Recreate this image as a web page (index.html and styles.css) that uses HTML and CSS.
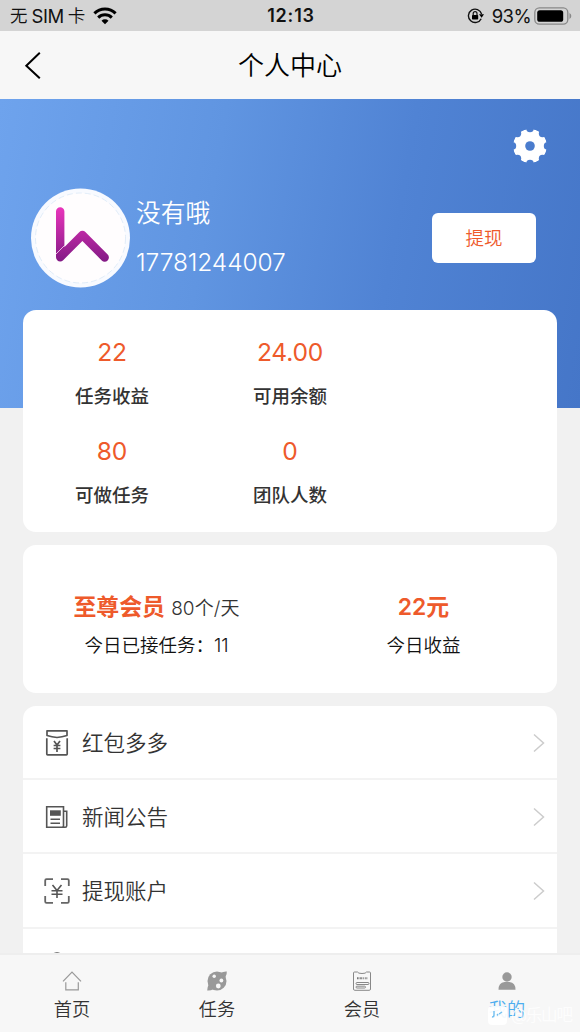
FILE: index.html
```html
<!DOCTYPE html>
<html lang="zh-CN">
<head>
<meta charset="utf-8">
<title>个人中心</title>
<link rel="stylesheet" href="styles.css">
</head>
<body>
<div class="app">
  <div class="status">
    <div class="status-side"><span class="carrier"><span>无</span><span class="sim">SIM</span><span>卡</span></span>
      <svg class="wifi" width="24" height="18" viewBox="0 0 24 18"><g fill="none" stroke="#000" stroke-width="3"><path d="M1.400 6.400a15 15 0 0 1 21.200 0"/><path d="M5.200 10.600a9.600 9.600 0 0 1 13.600 0"/></g><path d="M12 17.200l-3.500-3.500a5 5 0 0 1 7 0z"/></svg>
    </div>
    <b class="time">12:13</b>
    <div class="status-side status-right">
      <svg width="18" height="16" viewBox="0 0 18 16"><path d="M14.200 10.700A6.700 6.700 0 1 1 14.600 6" fill="none" stroke="#111" stroke-width="1.400"/><path d="M12 6.300h5l-2.400 3.400z"/><rect x="5" y="7" width="6.200" height="4.500" rx=".7"/><path d="M6.200 7.400V5.600a1.900 1.900 0 0 1 3.800 0v1.800" fill="none" stroke="#111" stroke-width="1.200"/></svg>
      <span class="percent">93%</span>
      <svg width="38" height="18" viewBox="0 0 38 18"><rect x=".8" y=".8" width="33" height="16.400" rx="4.600" fill="none" stroke="#888" stroke-width="1.300"/><rect x="3.200" y="3.200" width="26" height="11.600" rx="2.600"/><path d="M35.500 6v6q1.800-.8 1.800-3t-1.800-3z" fill="#888"/></svg>
    </div>
  </div>
  <header class="nav">
    <svg width="18" height="28" viewBox="0 0 18 28"><path d="M15.800 1.800L2.300 14.800l13.500 12.500" fill="none" stroke="#000" stroke-width="2"/></svg>
    <h1>个人中心</h1>
  </header>
  <main class="content">
    <section class="hero">
      <div class="settings">
        <svg width="34" height="34" viewBox="-17 -17 34 34"><defs><mask id="notches"><circle r="17" fill="#fff"/><g fill="#000"><circle r="4.800"/><circle cy="-17.500" r="3.700"/><circle cy="17.500" r="3.700"/><circle cx="-17.500" r="3.700"/><circle cx="17.500" r="3.700"/><circle cx="12.500" cy="12.500" r="3.700"/><circle cx="-12.500" cy="12.500" r="3.700"/><circle cx="12.500" cy="-12.500" r="3.700"/><circle cx="-12.500" cy="-12.500" r="3.700"/></g></mask></defs><circle r="17" fill="#fff" mask="url(#notches)"/></svg>
      </div>
      <div class="profile">
        <svg class="avatar" width="100" height="100" viewBox="0 0 100 100"><defs><linearGradient id="pink" gradientUnits="userSpaceOnUse" x1="0" y1="18" x2="0" y2="74"><stop stop-color="#ec36bd"/><stop offset="1" stop-color="#821a85"/></linearGradient></defs><circle cx="50.500" cy="50" r="49.500" fill="#f8faff"/><circle cx="50.500" cy="50" r="45" fill="#fffdfe" stroke="#dbe8f6" stroke-width=".8" stroke-dasharray="6 3"/><g fill="none" stroke="url(#pink)" stroke-width="8.400" stroke-linecap="round" stroke-linejoin="round"><path d="M30.200 23.500V69.200L52.400 47 74.700 69.500"/></g><path d="M26 66l9-9" stroke="#efcbe9" stroke-width=".9"/></svg>
        <div class="who"><div class="name">没有哦</div><div class="phone">17781244007</div></div>
        <button class="withdraw">提现</button>
      </div>
    </section>
    <section class="card stats">
      <div class="stat"><div class="num">22</div><div class="label">任务收益</div></div>
      <div class="stat"><div class="num">24.00</div><div class="label">可用余额</div></div>
      <div class="stat next"><div class="num">80</div><div class="label">可做任务</div></div>
      <div class="stat next"><div class="num">0</div><div class="label">团队人数</div></div>
    </section>
    <section class="card member">
      <div class="half"><div class="top"><b>至尊会员</b> <span class="quota">80个/天</span></div><div class="sub">今日已接任务：11</div></div>
      <div class="half"><div class="top"><b>22元</b></div><div class="sub">今日收益</div></div>
    </section>
    <section class="card list">
      <div class="row">
        <svg class="ico" width="28" height="28" viewBox="0 0 28 28"><g fill="none" stroke="#555" stroke-width="1.700" stroke-linejoin="round"><path d="M4 1.800h20V6.500q-5 1.400-10 2Q9 7.900 4 6.500z"/><path d="M3.800 9.200V25q0 .8.8.8h18.800q.8 0 .8-.8V9.200"/><path d="M11 12l3 4 3-4M14 16v7M10.600 16.500h6.800M10.600 19.500h6.800"/></g></svg>
        <span>红包多多</span><svg class="arrow" width="12" height="20" viewBox="0 0 12 20"><path d="M1 1.500L10.500 10 1 18.500"/></svg></div>
      <div class="row">
        <svg class="ico" width="28" height="28" viewBox="0 0 28 28"><g fill="none" stroke="#555" stroke-width="1.600"><path d="M3.700 3.800H20.500V24.200H3.700z"/><path d="M20.500 8.200h3.200v14.500q0 1.500-1.500 1.500h-3"/><path d="M7.500 16.300h9.500M7.500 20.300h9.500"/></g><path d="M7 7.300h10.800v5.500H7z" fill="#555"/></svg>
        <span>新闻公告</span><svg class="arrow" width="12" height="20" viewBox="0 0 12 20"><path d="M1 1.500L10.500 10 1 18.500"/></svg></div>
      <div class="row">
        <svg class="ico" width="28" height="28" viewBox="0 0 28 28"><g fill="none" stroke="#666" stroke-width="1.800"><path d="M2.200 9V3.500q0-1.300 1.300-1.300H10M18 2.200h6.500q1.300 0 1.300 1.300V9M25.800 19v5.500q0 1.300-1.300 1.300H18M10 25.800H3.500q-1.300 0-1.300-1.300V19"/></g><path d="M9.500 8l4.500 5.500L18.500 8M14 13.500V21M8.500 13.700h11M8.500 17.300h11" fill="none" stroke="#555" stroke-width="1.600"/></svg>
        <span>提现账户</span><svg class="arrow" width="12" height="20" viewBox="0 0 12 20"><path d="M1 1.500L10.500 10 1 18.500"/></svg></div>
      <div class="row peek"><svg class="ico" width="28" height="28" viewBox="0 0 28 28"><circle cx="14" cy="8" r="6" fill="none" stroke="#555" stroke-width="1.600"/></svg></div>
    </section>
  </main>
  <nav class="tabs">
    <div class="tab"><svg width="22" height="22" viewBox="0 0 22 22"><path d="M2 11.300L11 2l9 9.300M4.800 12.300v7.500h12.500v-7.500" fill="none" stroke="#999" stroke-width="1.200"/></svg><span>首页</span></div>
    <div class="tab"><svg width="22" height="22" viewBox="0 0 22 22"><circle cx="11" cy="11" r="9.500" fill="#999"/><path d="M14 3q4-1.800 6.800-1.500Q21.300 4 19 8zM3 14q-2 3.500-1.800 6.500Q4 21 8 19z" fill="#999"/><g fill="#f7f7f7"><circle cx="8.200" cy="6.300" r="1.700"/><circle cx="15.400" cy="10.500" r="1.900"/><circle cx="12.300" cy="16" r="2.400"/></g></svg><span>任务</span></div>
    <div class="tab"><svg width="22" height="22" viewBox="0 0 22 22"><path d="M3.500 2h3q.5 1.500 4.500 1.500T15.500 2h3q1 0 1 1v16q0 1.300-1.300 1.300H3.800q-1.300 0-1.300-1.300V3q0-1 1-1z" fill="none" stroke="#888"/><path d="M6 8.300h2.200M8.800 8.300h2.200M11.700 8.300h1.600M14.300 8.300h2" stroke="#777" stroke-width="2" stroke-dasharray="1 .4"/><rect x="5" y="12.500" width="13" height="2" rx="1" fill="none" stroke="#888"/><rect x="5" y="16.200" width="9.500" height="1.800" rx=".9" fill="none" stroke="#888"/></svg><span>会员</span></div>
    <div class="tab active"><svg width="22" height="22" viewBox="0 0 22 22"><circle cx="11" cy="7" r="4.700" fill="#999"/><path d="M2.500 19.700q0-7 6-7.700h5q6 .7 6 7.700z" fill="#999"/></svg><span>我的</span></div>
  </nav>
  <div class="mark"><svg width="19" height="19" viewBox="0 0 19 19"><rect width="19" height="19" rx="4" fill="#fff" fill-opacity=".92"/><path d="M6 5v4q0 2-2 2M9 9.500l1-1.500M11 8l3-2" fill="none" stroke="#72bff0" stroke-width="1.400"/></svg><span>@乐山吧</span></div>
</div>
</body>
</html>
```
FILE: styles.css
```css
* { box-sizing: border-box; }
body { margin: 0; font-family: Inter, "Noto Sans CJK SC", sans-serif; font-weight: 350; color: #333; background: #f1f1f1; }
svg { display: block; flex: none; }
.app { position: relative; height: 1032px; display: flex; flex-direction: column; overflow: hidden; }
.status { height: 31px; flex: none; display: flex; align-items: center; background: #d4d4d4; color: #111; padding: 0 8px 0 10px; }
.status-side { flex: 1; display: flex; align-items: center; gap: 8px; font-size: 18px; line-height: 24px; }
.carrier { display: flex; gap: 4px; font-size: 17.500px; }
.sim { font-size: 18.500px; font-weight: 400; letter-spacing: -.4px; }
.status-right { justify-content: flex-end; gap: 3px; }
.percent { font-size: 18.500px; font-weight: 400; letter-spacing: -.6px; margin-left: 4px; }
.time { font-size: 18px; font-weight: 600; letter-spacing: .8px; }
.nav { height: 68px; flex: none; display: flex; align-items: center; background: #f7f7f7; padding: 0 24px; }
.nav h1 { flex: 1; margin: 2px 18px 0 0; text-align: center; font-size: 26px; font-weight: 350; line-height: 36px; color: #000; }
.content { flex: 1; min-height: 0; overflow: hidden; }
.hero { height: 309px; background: linear-gradient(100deg, #6ea3ed, #6095e1 36%, #5083d4 66%, #4576c8); }
.settings { display: flex; justify-content: flex-end; padding: 30px 33px 0 0; }
.profile { display: flex; align-items: center; height: 100px; margin: 25px 44px 0 30px; }
.who { flex: 1; margin-left: 6px; color: #fff; }
.name { font-size: 24.700px; line-height: 49px; }
.phone { font-size: 24.500px; line-height: 49px; font-weight: 300; letter-spacing: -.1px; }
.withdraw { width: 104px; height: 50px; border: 0; border-radius: 6px; background: #fff; color: #ee5a2b; font: 350 18.500px/48px "Noto Sans CJK SC", sans-serif; padding: 0 0 2px; }
.card { margin: 0 23px 13px; background: #fff; border-radius: 13px; }
.stats { position: relative; height: 222.500px; margin-top: -98.500px; padding-top: 26.500px; display: grid; grid-template-columns: repeat(3, 1fr); grid-auto-rows: 99px; text-align: center; }
.next:nth-child(3) { grid-column: 1; }
.num { font-size: 24.600px; line-height: 33px; color: #ee5a2b; font-weight: 400; letter-spacing: -.2px; }
.label { margin-top: 14px; font-size: 18.500px; line-height: 26px; font-weight: 500; }
.member { height: 148px; padding-top: 45px; display: grid; grid-template-columns: 1fr 1fr; text-align: center; }
.top { height: 34px; line-height: 34px; font-size: 18.500px; }
.top b { font-size: 22.900px; font-weight: 600; color: #ee5a2b; }
.quota { font-size: 19px; letter-spacing: .1px; margin-left: 1px; }
.sub { margin-top: 8px; line-height: 26px; font-size: 18.500px; color: #111; }
.row { height: 74.200px; display: flex; align-items: center; padding: 2px 12px 0 20px; border-bottom: 2px solid #f3f3f3; font-size: 21.500px; }
.row span { flex: 1; margin-left: 11px; line-height: 32px; }
.peek { align-items: flex-start; padding-top: 22px; }
.arrow path { fill: none; stroke: #ccc; stroke-width: 1.500; }
.tabs { height: 79px; flex: none; display: grid; grid-template-columns: repeat(4, 1fr); border-top: 2px solid #eee; background: #f7f7f7; }
.tab { display: flex; flex-direction: column; align-items: center; padding: 15px 1px 0 0; font-size: 18.200px; line-height: 26px; }
.tab span { margin-top: 4px; }
.active { color: #4daef0; }
.mark { position: absolute; left: 488px; top: 1006px; display: flex; align-items: center; gap: 4px; white-space: nowrap; color: rgba(255,255,255,.85); font-size: 16.500px; line-height: 19px; letter-spacing: -1.200px; }
```
